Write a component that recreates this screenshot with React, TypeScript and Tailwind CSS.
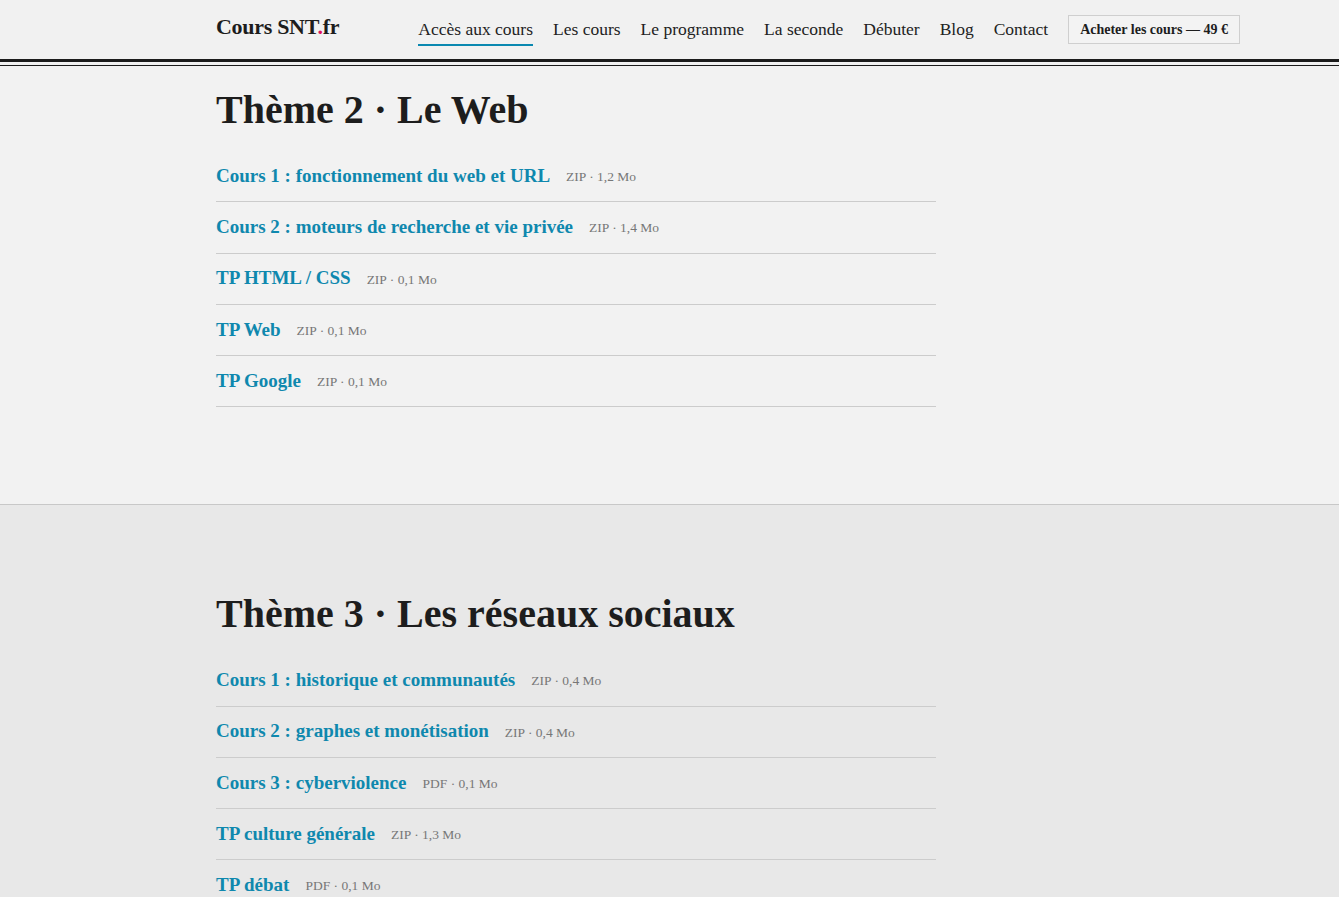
const serif = 'font-["Liberation_Serif","DejaVu_Serif",serif]'

type Item = { title: string; kind: string; size: string }

const theme2: Item[] = [
  { title: 'Cours 1 : fonctionnement du web et URL', kind: 'ZIP', size: '1,2 Mo' },
  { title: 'Cours 2 : moteurs de recherche et vie privée', kind: 'ZIP', size: '1,4 Mo' },
  { title: 'TP HTML / CSS', kind: 'ZIP', size: '0,1 Mo' },
  { title: 'TP Web', kind: 'ZIP', size: '0,1 Mo' },
  { title: 'TP Google', kind: 'ZIP', size: '0,1 Mo' },
]

const theme3: Item[] = [
  { title: 'Cours 1 : historique et communautés', kind: 'ZIP', size: '0,4 Mo' },
  { title: 'Cours 2 : graphes et monétisation', kind: 'ZIP', size: '0,4 Mo' },
  { title: 'Cours 3 : cyberviolence', kind: 'PDF', size: '0,1 Mo' },
  { title: 'TP culture générale', kind: 'ZIP', size: '1,3 Mo' },
  { title: 'TP débat', kind: 'PDF', size: '0,1 Mo' },
]

const nav = ['Accès aux cours', 'Les cours', 'Le programme', 'La seconde', 'Débuter', 'Blog', 'Contact']

function Header() {
  return (
    <header className="bg-[#f1f1f1]">
      <div className="ml-[216px] flex h-[59px] w-[1024px] items-center">
        <a href="#" className="mb-[6px] text-[22px] font-bold tracking-[-0.3px] text-[#1d1d1d]">
          Cours SNT<span className="text-[#e0115f]">.</span>fr
        </a>
        <nav className="ml-auto flex items-center gap-[20px] text-[17.5px] text-[#222]">
          {nav.map((n, i) => (
            <a
              key={n}
              href="#"
              className={`pt-[3px] pb-[2px] border-b-2 ${i === 0 ? 'border-[#0a88b0]' : 'border-transparent'}`}
            >
              {n}
            </a>
          ))}
          <a
            href="#"
            className="border border-[#cfcfcf] bg-[#f3f3f3] px-[11px] py-[3px] text-[14px] font-bold text-[#1d1d1d]"
          >
            Acheter les cours — 49 €
          </a>
        </nav>
      </div>
      <div className="h-[3px] bg-[#1c1c1c]" />
      <div className="h-[3px] bg-[#f1f1f1]" />
      <div className="h-px bg-[#1c1c1c]" />
    </header>
  )
}

function Theme({ title, items }: { title: string; items: Item[] }) {
  return (
    <div className="ml-[216px] w-[720px]">
      <h2 className="text-[40px] font-bold leading-[48px] text-[#1d1d1d]">{title}</h2>
      <ul className="mt-[17px]">
        {items.map((it) => (
          <li key={it.title} className="flex h-[51.25px] items-center border-b border-[#cccccc]">
            <a href="#" className="text-[19px] font-bold text-[#0f88ae]">
              {it.title}
            </a>
            <span className="ml-[16px] pt-[2px] text-[13.5px] text-[#777]">
              {it.kind} · {it.size}
            </span>
          </li>
        ))}
      </ul>
    </div>
  )
}

export default function App() {
  return (
    <div className={`min-h-screen bg-[#e8e8e8] ${serif}`}>
      <Header />
      <section className="bg-[#f2f2f2] pt-[20px] pb-[97px]">
        <Theme title="Thème 2 · Le Web" items={theme2} />
      </section>
      <section className="border-t border-[#c8c8c8] bg-[#e8e8e8] pt-[85px] pb-[40px]">
        <Theme title="Thème 3 · Les réseaux sociaux" items={theme3} />
      </section>
    </div>
  )
}
